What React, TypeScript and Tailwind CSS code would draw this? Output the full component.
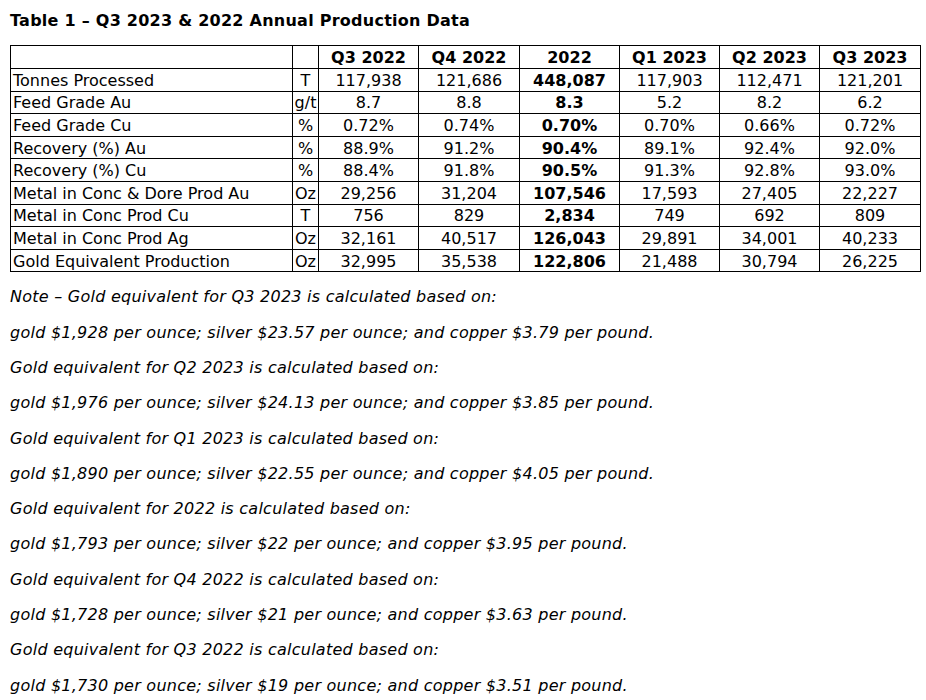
import React from "react";

const rows: { label: string; unit: string; vals: string[] }[] = [
  { label: "Tonnes Processed", unit: "T", vals: ["117,938", "121,686", "448,087", "117,903", "112,471", "121,201"] },
  { label: "Feed Grade Au", unit: "g/t", vals: ["8.7", "8.8", "8.3", "5.2", "8.2", "6.2"] },
  { label: "Feed Grade Cu", unit: "%", vals: ["0.72%", "0.74%", "0.70%", "0.70%", "0.66%", "0.72%"] },
  { label: "Recovery (%) Au", unit: "%", vals: ["88.9%", "91.2%", "90.4%", "89.1%", "92.4%", "92.0%"] },
  { label: "Recovery (%) Cu", unit: "%", vals: ["88.4%", "91.8%", "90.5%", "91.3%", "92.8%", "93.0%"] },
  { label: "Metal in Conc & Dore Prod Au", unit: "Oz", vals: ["29,256", "31,204", "107,546", "17,593", "27,405", "22,227"] },
  { label: "Metal in Conc Prod Cu", unit: "T", vals: ["756", "829", "2,834", "749", "692", "809"] },
  { label: "Metal in Conc Prod Ag", unit: "Oz", vals: ["32,161", "40,517", "126,043", "29,891", "34,001", "40,233"] },
  { label: "Gold Equivalent Production", unit: "Oz", vals: ["32,995", "35,538", "122,806", "21,488", "30,794", "26,225"] },
];

const heads = ["Q3 2022", "Q4 2022", "2022", "Q1 2023", "Q2 2023", "Q3 2023"];

const notes = [
  "Note – Gold equivalent for Q3 2023 is calculated based on:",
  "gold $1,928 per ounce; silver $23.57 per ounce; and copper $3.79 per pound.",
  "Gold equivalent for Q2 2023 is calculated based on:",
  "gold $1,976 per ounce; silver $24.13 per ounce; and copper $3.85 per pound.",
  "Gold equivalent for Q1 2023 is calculated based on:",
  "gold $1,890 per ounce; silver $22.55 per ounce; and copper $4.05 per pound.",
  "Gold equivalent for 2022 is calculated based on:",
  "gold $1,793 per ounce; silver $22 per ounce; and copper $3.95 per pound.",
  "Gold equivalent for Q4 2022 is calculated based on:",
  "gold $1,728 per ounce; silver $21 per ounce; and copper $3.63 per pound.",
  "Gold equivalent for Q3 2022 is calculated based on:",
  "gold $1,730 per ounce; silver $19 per ounce; and copper $3.51 per pound.",
];

export default function App() {
  return (
    <div className="w-[926px] h-[700px] overflow-hidden bg-white text-black font-['DejaVu_Sans',sans-serif] pl-[10px] pt-[10px]">
      <h1 className="font-bold text-[16px] leading-[22px] tracking-[0.25px]">
        Table 1 – Q3 2023 &amp; 2022 Annual Production Data
      </h1>
      <table className="mt-[13px] border-collapse text-[16px] leading-[19px] table-fixed w-[911px]">
        <colgroup>
          <col className="w-[282px]" />
          <col className="w-[26px]" />
          <col className="w-[100px]" />
          <col className="w-[101px]" />
          <col className="w-[100px]" />
          <col className="w-[100px]" />
          <col className="w-[100px]" />
          <col className="w-[101px]" />
        </colgroup>
        <thead>
          <tr className="h-[23px]">
            <th className="border border-black p-0"></th>
            <th className="border border-black p-0"></th>
            {heads.map((h) => (
              <th key={h} className="border border-black p-0 text-center font-bold">
                {h}
              </th>
            ))}
          </tr>
        </thead>
        <tbody>
          {rows.map((r) => (
            <tr key={r.label} className="h-[22.6px]">
              <td className="border border-black px-[2px] pt-[1px] pb-0 text-left whitespace-nowrap">{r.label}</td>
              <td className="border border-black p-0 pt-[1px] text-center whitespace-nowrap">{r.unit}</td>
              {r.vals.map((v, i) => (
                <td
                  key={i}
                  className={
                    i === 2
                      ? "border border-black p-0 pt-[1px] text-center font-bold"
                      : "border border-black p-0 pt-[1px] text-center"
                  }
                >
                  {v}
                </td>
              ))}
            </tr>
          ))}
        </tbody>
      </table>
      <div className="mt-[15px] italic text-[16px] leading-[19px] tracking-[0.25px]">
        {notes.map((n, i) => (
          <p key={i} className="mb-[16.3px]">
            {n}
          </p>
        ))}
      </div>
    </div>
  );
}
